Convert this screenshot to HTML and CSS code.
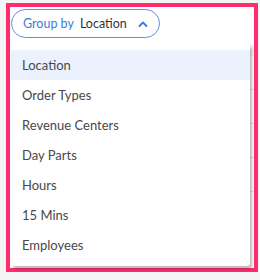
FILE: index.html
```html
<!DOCTYPE html>
<html>
  <head>
    <title>Group by</title>
    <link rel="stylesheet" href="styles.css">
  </head>
  <body>
    <div class="frame">
      <button class="pill">
        <span class="pill-label">Group by</span>
        <span class="pill-value">Location</span>
        <svg class="caret" width="10" height="6" viewBox="0 0 10 6">
          <path d="M1.5 5 L5 1.5 L8.5 5" fill="none" stroke="#3b7be0" stroke-width="1.8" stroke-linecap="round" stroke-linejoin="round"/>
        </svg>
      </button>

      <!-- table behind the menu -->
      <div class="table">
        <div class="table-head"></div>
        <div class="table-row"></div>
        <div class="table-row"></div>
        <div class="table-row"></div>
        <div class="table-row"></div>
      </div>

      <ul class="menu">
        <li class="menu-item active">Location</li>
        <li class="menu-item">Order Types</li>
        <li class="menu-item">Revenue Centers</li>
        <li class="menu-item">Day Parts</li>
        <li class="menu-item">Hours</li>
        <li class="menu-item">15 Mins</li>
        <li class="menu-item">Employees</li>
      </ul>
    </div>
  </body>
</html>
```

FILE: styles.css
```css
body {
  margin: 0;
  background-color: #f5f5f5;
  font-family: Lato, "Noto Sans", sans-serif;
}
.frame {
  position: relative;
  box-sizing: border-box;
  width: 252px;
  height: 269px;
  margin: 3px 0 0 6px;
  border: 4px solid #ff2d6e;
  background-color: #ffffff;
  padding: 2px 0 0 1px;
}
.pill {
  display: flex;
  align-items: center;
  box-sizing: border-box;
  width: 149px;
  height: 29px;
  padding: 0 0 0 11px;
  border: 1px solid #5d8fee;
  border-radius: 15px;
  background-color: #ffffff;
  font-family: inherit;
  font-size: 12.5px;
  cursor: pointer;
}
.pill-label {
  color: #3b7be0;
}
.pill-value {
  color: #333333;
  margin-left: 6px;
}
.caret {
  margin-left: 11px;
}
.table {
  margin-top: 6px;
}
.table-head {
  height: 12px;
  background-color: #f4f4f4;
}
.table-row {
  height: 33px;
  border-bottom: 1px solid #e4e4e4;
}
.menu {
  position: absolute;
  left: 1px;
  top: 37px;
  width: 239px;
  margin: 0;
  padding: 6px 0;
  list-style: none;
  background-color: #ffffff;
  border-radius: 3px;
  box-shadow: 2px 3px 3px rgba(0, 0, 0, 0.28);
}
.menu-item {
  height: 30px;
  line-height: 30px;
  padding-left: 11px;
  font-size: 13px;
  color: #484848;
}
.menu-item.active {
  background-color: #ebf2fd;
}
```
